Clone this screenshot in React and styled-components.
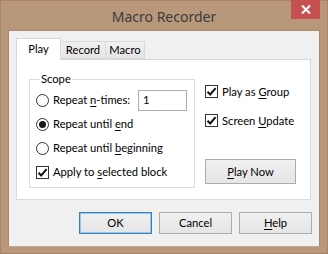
import React from "react";
import styled, { createGlobalStyle } from "styled-components";

const Global = createGlobalStyle`
  html, body { margin: 0; padding: 0; background: #b9977b; }
  body { font-family: Lato, "Noto Sans", sans-serif; }
`;

const Frame = styled.div`
  width: 328px;
  height: 254px;
  box-sizing: border-box;
  background: #b9977b;
  border: 1px solid #a88466;
  display: flex;
  flex-direction: column;
`;

const TitleBar = styled.div`
  height: 29px;
  flex: none;
  display: grid;
  grid-template-columns: 1fr auto 1fr;
  padding: 0 7px;
`;

const Title = styled.div`
  grid-column: 2;
  font-family: "Noto Sans", sans-serif;
  font-size: 14px;
  color: #3b3b3b;
  line-height: 29px;
  padding-top: 1px;
`;

const Close = styled.div`
  grid-column: 3;
  justify-self: end;
  width: 29px;
  height: 19px;
  margin-top: -1px;
  background: #c75050;
  display: flex;
  align-items: center;
  justify-content: center;
`;

const Client = styled.div`
  margin: 0 7px 6px;
  flex: 1;
  background: #f0f0f0;
  border: 1px solid #aa8a6e;
  border-bottom-color: #c3a68e;
  display: flex;
  flex-direction: column;
  padding: 7px 7px 0 7px;
  font-size: 11.2px;
  color: #000;
`;

const TabStrip = styled.div`
  display: flex;
  align-items: flex-end;
  height: 21px;
  position: relative;
  z-index: 1;
`;

const Tab = styled.div`
  box-sizing: border-box;
  height: ${(p) => (p.$active ? "22px" : "18px")};
  margin-bottom: ${(p) => (p.$active ? "-1px" : "0")};
  padding-top: ${(p) => (p.$active ? "2px" : "0")};
  width: ${(p) => p.$w}px;
  text-align: center;
  border: 1px solid #d9d9d9;
  border-bottom: ${(p) => (p.$active ? "none" : "1px solid #d9d9d9")};
  margin-left: ${(p) => (p.$first ? "0" : "-1px")};
  background: ${(p) =>
    p.$active ? "#ffffff" : "linear-gradient(#f0f0f0, #e5e5e5)"};
  line-height: 16px;
`;

const Panel = styled.div`
  width: 295px;
  height: 141px;
  flex: none;
  box-sizing: border-box;
  background: #fff;
  border: 1px solid #d9d9d9;
  display: flex;
  padding: 12px 0 0 12px;
  gap: 10px;
`;

const Group = styled.fieldset`
  margin: 0;
  min-width: 0;
  width: 166px;
  height: 116px;
  box-sizing: border-box;
  border: 1px solid #dcdcdc;
  border-radius: 0;
  padding: 2px 7px 0 6px;
  display: flex;
  flex-direction: column;
`;

const Legend = styled.legend`
  padding: 0 1px;
  margin-left: 4px;
  line-height: 14px;
`;

const Row = styled.div`
  display: flex;
  align-items: center;
  height: 24px;
  gap: 4px;
`;

const Label = styled.span`
  white-space: nowrap;
  line-height: 16px;
`;

const U = styled.span`
  text-decoration: underline;
  text-underline-offset: 2px;
`;

const RadioCircle = styled.span`
  width: 13px;
  height: 13px;
  box-sizing: border-box;
  border-radius: 50%;
  border: 1px solid #333;
  background: #fff;
  display: inline-flex;
  align-items: center;
  justify-content: center;
  flex: none;
  &::after {
    content: "";
    width: 7px;
    height: 7px;
    border-radius: 50%;
    background: ${(p) => (p.$on ? "#1a1a1a" : "transparent")};
  }
`;

const Box = styled.span`
  width: 13px;
  height: 13px;
  box-sizing: border-box;
  border: 1px solid #333;
  background: #fff;
  display: inline-flex;
  align-items: center;
  justify-content: center;
  flex: none;
`;

const TextBox = styled.div`
  margin-left: auto;
  width: 49px;
  height: 21px;
  box-sizing: border-box;
  border: 1px solid #abadb3;
  background: #fff;
  padding: 1px 0 0 4px;
  line-height: 16px;
`;

const Right = styled.div`
  display: flex;
  flex-direction: column;
  padding-top: 5px;
`;

const RightRow = styled(Row)`
  height: 29px;
`;

const Button = styled.div`
  width: ${(p) => p.$w || 73}px;
  height: ${(p) => p.$h || 22}px;
  box-sizing: border-box;
  border: 1px solid ${(p) => (p.$default ? "#3c7fb1" : "#acacac")};
  box-shadow: ${(p) => (p.$default ? "inset 0 0 0 1px #94c6f3" : "none")};
  background: linear-gradient(#f0f0f0, #e5e5e5);
  display: flex;
  align-items: center;
  justify-content: center;
  line-height: 16px;
`;

const PlayNow = styled(Button)`
  margin-top: 24px;
`;

const Footer = styled.div`
  display: flex;
  justify-content: flex-end;
  gap: 7px;
  padding-top: 12px;
`;

const Check = () => (
  <Box>
    <svg width="11" height="11" viewBox="0 0 11 11">
      <path d="M1.5 5.8 L4.2 8.5 L9.6 2.2" fill="none" stroke="#111" strokeWidth="2" />
    </svg>
  </Box>
);

export default function App() {
  return (
    <>
      <Global />
      <Frame>
        <TitleBar>
          <Title>Macro Recorder</Title>
          <Close>
            <svg width="10" height="9" viewBox="0 0 10 9">
              <path d="M1 0.5 L9 8.5 M9 0.5 L1 8.5" stroke="#fff" strokeWidth="2" />
            </svg>
          </Close>
        </TitleBar>
        <Client>
          <TabStrip>
            <Tab $active $first $w={45}>Play</Tab>
            <Tab $w={46}>Record</Tab>
            <Tab $w={40}>Macro</Tab>
          </TabStrip>
          <Panel>
            <Group>
              <Legend>Scope</Legend>
              <Row>
                <RadioCircle />
                <Label>
                  Repeat <U>n</U>-times:
                </Label>
                <TextBox>1</TextBox>
              </Row>
              <Row>
                <RadioCircle $on />
                <Label>
                  Repeat until <U>e</U>nd
                </Label>
              </Row>
              <Row>
                <RadioCircle />
                <Label>
                  Repeat until <U>b</U>eginning
                </Label>
              </Row>
              <Row>
                <Check />
                <Label>
                  Apply to <U>s</U>elected block
                </Label>
              </Row>
            </Group>
            <Right>
              <RightRow>
                <Check />
                <Label>
                  Play as <U>G</U>roup
                </Label>
              </RightRow>
              <RightRow>
                <Check />
                <Label>
                  Screen <U>U</U>pdate
                </Label>
              </RightRow>
              <PlayNow $w={91} $h={25}>
                <Label>
                  <U>P</U>lay Now
                </Label>
              </PlayNow>
            </Right>
          </Panel>
          <Footer>
            <Button $default>OK</Button>
            <Button>Cancel</Button>
            <Button>
              <Label>
                <U>H</U>elp
              </Label>
            </Button>
          </Footer>
        </Client>
      </Frame>
    </>
  );
}
